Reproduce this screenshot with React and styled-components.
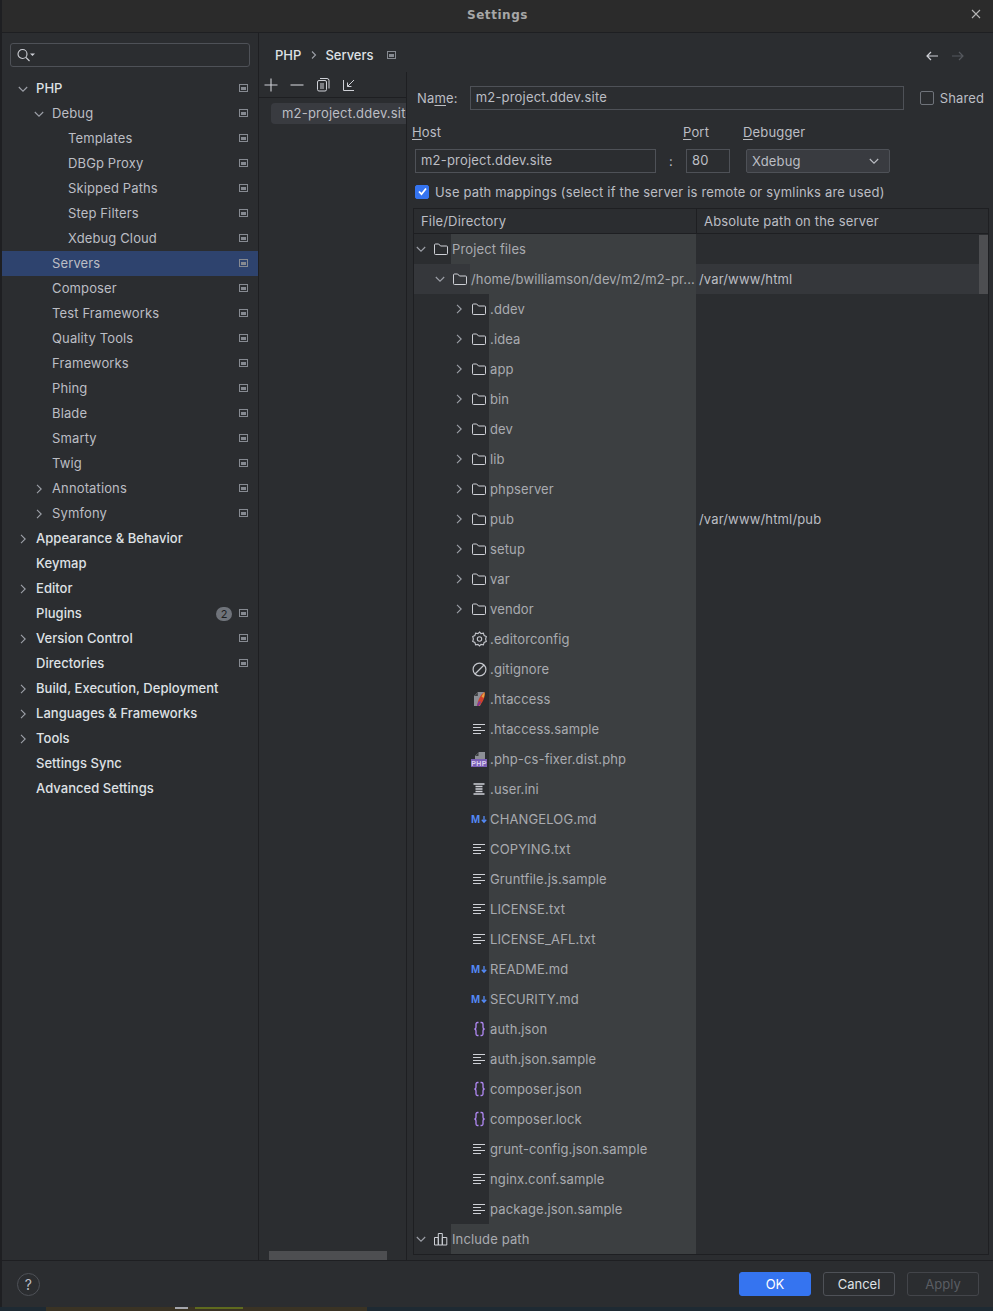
import React from "react";
import styled, { createGlobalStyle } from "styled-components";

const Global = createGlobalStyle`
  html, body { margin: 0; padding: 0; background: #1e1f22; }
  body { font-family: Inter, "Noto Sans", sans-serif; font-size: 13px; color: #bcbec4; letter-spacing: .17px; }
  * { box-sizing: border-box; }
`;

const Dialog = styled.div`
  width: 993px; height: 1311px; display: flex; flex-direction: column; background: #1e1f22; overflow: hidden;
`;
const Window = styled.div`
  height: 1307px; flex: none; display: flex; flex-direction: column; background: #2b2d30; margin-left: 2px; border-top-left-radius: 6px;
`;
const BehindStrip = styled.div`flex: 1; display: flex; background: #1e2a33;`;
const BehindPanel = styled.div`
  margin-left: 46px; width: 321px; background: #3a3324; display: flex; justify-content: flex-start; padding-left: 129px; gap: 7px;
`;
const BehindIcon = styled.span`width: 13px; height: 2px; background: #a4a6ac; flex: none;`;
const BehindText = styled.span`width: 48px; height: 2px; background: #5f6a1e; flex: none;`;
const TitleBar = styled.div`
  height: 33px; flex: none; display: flex; align-items: center; justify-content: center; position: relative;
  background: #2b2b2b; border-bottom: 1px solid #1e1f22; font-family: "DejaVu Sans", sans-serif; font-weight: 700; font-size: 12px; color: #a7a7a7; letter-spacing: .55px; padding-bottom: 3px;
`;
const CloseBtn = styled.svg`
  position: absolute; right: 12px; top: 9px;
`;
const Body = styled.div`flex: 1; min-height: 0; display: flex;`;
const Sidebar = styled.div`
  width: 257px; flex: none; border-right: 1px solid #1e1f22; padding-top: 10px; display: flex; flex-direction: column;
`;
const SearchBox = styled.div`
  width: 240px; height: 24px; margin-left: 8px; margin-bottom: 9px; border: 1px solid #4e5157; border-radius: 3px; display: flex; align-items: center; padding-left: 5px; flex: none;
`;
const Row = styled.div`
  height: 25px; flex: none; display: flex; align-items: center; position: relative; padding-left: ${p => p.$pad}px; padding-right: 10px;
  background: ${p => (p.$selected ? "#2e436e" : "transparent")};
  color: ${p => (p.$top ? "#dfe1e5" : "#bcbec4")};
  font-weight: ${p => (p.$top ? 500 : 400)};
  letter-spacing: ${p => (p.$top ? ".04px" : ".13px")};
`;
const ChevSlot = styled.span`
  position: absolute; left: ${p => p.$pad - 19}px; top: 7px; width: 12px; height: 12px; display: flex;
`;
const RowLabel = styled.span`flex: 1; line-height: 25px; white-space: nowrap;`;
const Badge = styled.span`
  width: 16px; height: 14px; border-radius: 7px; background: #6f737a; color: #1e1f22; font-size: 11px; font-weight: 400; display: flex; align-items: center; justify-content: center; margin-right: 7px;
`;
const PinMark = styled.svg`flex: none; margin-top: -1px;`;
const Main = styled.div`flex: 1; min-width: 0; display: flex; flex-direction: column;`;
const Breadcrumb = styled.div`
  height: 39px; flex: none; display: flex; align-items: center; padding-left: 16px; padding-top: 4px; font-weight: 500; color: #dfe1e5; position: relative; letter-spacing: 0;
`;
const Crumb = styled.span`line-height: 16px;`;
const Sep = styled.svg`margin: 0 7px 0 9px;`;
const CrumbIcon = styled.span`display: flex; margin-left: 13px; margin-top: 2px;`;
const NavArrows = styled.div`position: absolute; right: 27px; top: 17px; display: flex; gap: 10px;`;
const Split = styled.div`flex: 1; min-height: 0; display: flex;`;
const ListPane = styled.div`
  width: 148px; flex: none; border-right: 1px solid #1e1f22; display: flex; flex-direction: column; position: relative; overflow: hidden;
`;
const Toolbar = styled.div`
  height: 26px; flex: none; border-bottom: 1px solid #1e1f22; display: flex; align-items: center; padding-left: 4px; gap: 10px;
`;
const ServerItem = styled.div`
  margin: 5px 0 0 12px; width: 200px; height: 21px; background: #393b40; border-radius: 4px; padding-left: 11px; line-height: 20px; color: #bcbec4; white-space: nowrap; flex: none; letter-spacing: .2px;
`;
const HScroll = styled.div`position: absolute; left: 10px; bottom: 0; width: 118px; height: 9px; background: #4d4e51;`;
const Form = styled.div`flex: 1; min-width: 0; padding: 0 4px 5px 4px; display: flex; flex-direction: column;`;
const NameRow = styled.div`height: 37px; margin-top: 7px; flex: none; display: flex; align-items: center; padding-left: 6px;`;
const FieldLabel = styled.span`color: #bcbec4; line-height: 16px; u { text-underline-offset: 2px; }`;
const Input = styled.div`
  height: 24px; width: ${p => p.$w}px; margin-left: ${p => p.$ml || 0}px; border: 1px solid #4e5157; background: #2b2d30; padding-left: 5px; line-height: 21px; color: #bcbec4; flex: none; letter-spacing: .2px;
`;
const Check = styled.span`
  width: 14px; height: 14px; border-radius: 2px; flex: none; display: flex; align-items: center; justify-content: center;
  border: 1px solid ${p => (p.$on ? "#3574f0" : "#6f737a")}; background: ${p => (p.$on ? "#3574f0" : "transparent")};
`;
const SharedWrap = styled.div`display: flex; align-items: center; gap: 6px; margin-left: 16px; white-space: nowrap; padding-top: 1px;`;
const HostLabels = styled.div`height: 22px; flex: none; display: flex; align-items: center; margin-top: 5px; padding-left: 1px;`;
const LabelCell = styled.span`width: ${p => p.$w}px; flex: none; u { text-underline-offset: 2px; }`;
const HostRow = styled.div`height: 30px; margin-top: 6px; flex: none; display: flex; align-items: flex-start; padding-left: 4px;`;
const Colon = styled.span`width: 30px; flex: none; text-align: center; line-height: 24px;`;
const Select = styled.div`
  width: 144px; height: 24px; margin-left: 16px; background: #393b40; border: 1px solid #4e5157; border-radius: 2px; display: flex; align-items: center; justify-content: space-between; padding: 0 9px 0 5px; flex: none;
`;
const MapRow = styled.div`height: 25px; flex: none; padding-left: 4px; display: flex; align-items: center; gap: 6px;`;
const Table = styled.div`
  flex: 1; min-height: 0; margin-top: 4px; margin-left: 2px; border: 1px solid #1e1f22; position: relative; display: flex; flex-direction: column; overflow: hidden;
`;
const HeaderRow = styled.div`height: 25px; flex: none; display: grid; grid-template-columns: 282px 1fr; border-bottom: 1px solid #1e1f22;`;
const HeadCell = styled.div`padding-left: ${p => p.$pad}px; line-height: 24px; color: #bcbec4; border-left: ${p => (p.$div ? "1px solid #1e1f22" : "none")};`;
const TreeRow = styled.div`
  height: 30px; flex: none; display: grid; grid-template-columns: 282px 1fr; padding-right: 10px;
  background: ${p => (p.$hl ? "#35373b" : "transparent")};
`;
const TreeCell = styled.div`display: flex; align-items: center; min-width: 0; position: relative; padding-left: ${p => p.$indent}px;`;
const TreeChev = styled.span`width: 12px; height: 12px; display: flex; flex: none; position: absolute; left: ${p => p.$left}px; top: 9px;`;
const TreeIcon = styled.span`
  width: 16px; height: 16px; flex: none; display: flex; align-items: center; justify-content: center; margin-right: 2px;
`;
const Shade = styled.span`
  flex: 1; min-width: 0; align-self: stretch; background: #3c3f41; line-height: 30px; padding-left: 1px; color: #a9abb0; white-space: nowrap; overflow: hidden; letter-spacing: .13px;
`;
const ServerPath = styled.div`line-height: 30px; padding-left: 3px; color: #bcbec4; letter-spacing: .15px;`;
const VScroll = styled.div`position: absolute; right: 0; top: 26px; width: 9px; height: 59px; background: #4d4e51;`;
const Footer = styled.div`
  height: 47px; flex: none; border-top: 1px solid #1e1f22; display: flex; align-items: center; padding: 0 14px 0 15px; gap: 12px;
`;
const Help = styled.div`
  width: 23px; height: 23px; border-radius: 50%; border: 1px solid #4e5157; display: flex; align-items: center; justify-content: center; color: #bcbec4; font-size: 14px; margin-right: auto;
`;
const Btn = styled.div`
  width: 72px; height: 24px; border-radius: 3px; display: flex; align-items: center; justify-content: center; font-size: 13px; letter-spacing: 0;
  background: ${p => (p.$primary ? "#3574f0" : "transparent")};
  border: 1px solid ${p => (p.$primary ? "#3574f0" : p.$dis ? "#43454a" : "#4e5157")};
  color: ${p => (p.$primary ? "#fff" : p.$dis ? "#5a5d63" : "#dfe1e5")};
`;

const Chevron = ({ open, color = "#9da0a8" }) => (
  <svg width="12" height="12" viewBox="0 0 12 12" fill="none" stroke={color} strokeWidth="1.1">
    {open ? <path d="M1.8 4l4.2 4.2L10.2 4" /> : <path d="M4 1.8l4.2 4.2L4 10.2" />}
  </svg>
);
const Pin = () => (
  <PinMark width="9" height="8" viewBox="0 0 9 8">
    <rect x=".5" y=".5" width="8" height="7" fill="none" stroke="#868a91" />
    <rect x="2" y="3" width="5" height="3" fill="#868a91" />
  </PinMark>
);
const Folder = () => (
  <svg width="16" height="16" viewBox="0 0 16 16" fill="none" stroke="#ced0d6" strokeWidth="1">
    <path d="M1.5 4a1 1 0 0 1 1-1h3.2l1.8 2h6a1 1 0 0 1 1 1v6.5a1 1 0 0 1-1 1h-11a1 1 0 0 1-1-1z" />
  </svg>
);
const TextFile = () => (
  <svg width="14" height="12" viewBox="0 0 14 12" stroke="#ced0d6" strokeWidth="1.2">
    <path d="M1 1.5h12M1 4.5h8M1 7.5h12M1 10.5h8" />
  </svg>
);
const Gear = () => (
  <svg width="15" height="16" viewBox="0 0 15 16" fill="none" stroke="#c4c6cc" strokeWidth="1.1">
    <path d="M7.5 1l1.500 1.600 2.400-.4.700 2.300 2.200 1-.7 2.500.7 2.500-2.200 1-.7 2.300-2.400-.4L7.500 15l-1.500-1.600-2.400.4-.7-2.300-2.200-1 .7-2.500-.7-2.500 2.200-1 .7-2.300 2.400.4z" />
    <circle cx="7.500" cy="8" r="2.200" />
  </svg>
);
const Ignore = () => (
  <svg width="15" height="15" viewBox="0 0 15 15" fill="none" stroke="#c4c6cc" strokeWidth="1.2">
    <circle cx="7.5" cy="7.5" r="6.4" /><path d="M3 12L12 3" />
  </svg>
);
const Apache = () => (
  <svg width="14" height="16" viewBox="0 0 14 16">
    <path d="M2 15V5l4-4h6v3L8 15z" fill="#8d8f96" />
    <path d="M5.800 5V1.500L2.300 5z" fill="#3c3f41" />
    <path d="M5 15C6 9 8 4 12.500 1c1 4-1 10-5.500 14z" fill="#d0402c" />
    <path d="M9.500 5.500c1-2 2-3 3-4.500.3 2 0 4-1 6z" fill="#e8a33d" />
    <path d="M5 15c.6-2 1-3.500 2-5l2 1c-1 2-2 3-2.500 4z" fill="#7a3a9c" />
  </svg>
);
const PhpFile = () => (
  <svg width="16" height="16" viewBox="0 0 16 16">
    <path d="M8 1H14v7H4V5z" fill="#8d8f96" />
    <path d="M7.500 5V1.500L4.500 5z" fill="#3c3f41" />
    <rect x="0" y="8" width="16" height="8" fill="#7a5fb5" />
    <text x="8" y="14.500" textAnchor="middle" fontFamily="'Liberation Sans', sans-serif" fontSize="7" fontWeight="700" letterSpacing=".3" fill="#d9d0ee">PHP</text>
  </svg>
);
const IniFile = () => (
  <svg width="12" height="12" viewBox="0 0 12 12" stroke="#ced0d6" strokeWidth="1.4">
    <path d="M.5 1h11M2.500 3.500h7M2.500 6h7M2.500 8.500h7M.5 11h11" />
  </svg>
);
const Markdown = () => (
  <svg width="16" height="14" viewBox="0 0 16 14" fill="none" stroke="#548af7">
    <text x="0" y="11" fontFamily="'Liberation Sans', sans-serif" fontSize="11" fontWeight="700" fill="#548af7" stroke="none" letterSpacing="0">M</text>
    <path d="M13 4v6M10.800 7.800l2.200 2.500 2.200-2.500" strokeWidth="1.300" />
  </svg>
);
const Json = () => (
  <svg width="13" height="16" viewBox="0 0 13 16" fill="none" stroke="#b189f5" strokeWidth="1.300">
    <path d="M5.500 1.500h-1a1.500 1.500 0 0 0-1.500 1.500v3.200c0 .8-.5 1.600-1.500 1.800 1 .2 1.500 1 1.500 1.800V13a1.500 1.500 0 0 0 1.500 1.500h1" />
    <path d="M7.500 1.500h1A1.500 1.500 0 0 1 10 3v3.200c0 .8.500 1.600 1.500 1.800-1 .2-1.500 1-1.500 1.800V13a1.500 1.500 0 0 1-1.500 1.500h-1" />
  </svg>
);
const Library = () => (
  <svg width="14" height="14" viewBox="0 0 14 14" fill="none" stroke="#ced0d6" strokeWidth="1">
    <path d="M.5 13V5.500h3.800V13zM4.300 13V1.500h4V13zM8.300 13V5.500h4.500V13z" />
  </svg>
);

const settings = [
  ["PHP", 36, { top: 1, open: 1, pin: 1 }],
  ["Debug", 52, { open: 1, pin: 1 }],
  ["Templates", 68, { pin: 1 }],
  ["DBGp Proxy", 68, { pin: 1 }],
  ["Skipped Paths", 68, { pin: 1 }],
  ["Step Filters", 68, { pin: 1 }],
  ["Xdebug Cloud", 68, { pin: 1 }],
  ["Servers", 52, { pin: 1, selected: 1 }],
  ["Composer", 52, { pin: 1 }],
  ["Test Frameworks", 52, { pin: 1 }],
  ["Quality Tools", 52, { pin: 1 }],
  ["Frameworks", 52, { pin: 1 }],
  ["Phing", 52, { pin: 1 }],
  ["Blade", 52, { pin: 1 }],
  ["Smarty", 52, { pin: 1 }],
  ["Twig", 52, { pin: 1 }],
  ["Annotations", 52, { closed: 1, pin: 1 }],
  ["Symfony", 52, { closed: 1, pin: 1 }],
  ["Appearance & Behavior", 36, { top: 1, closed: 1 }],
  ["Keymap", 36, { top: 1 }],
  ["Editor", 36, { top: 1, closed: 1 }],
  ["Plugins", 36, { top: 1, pin: 1, badge: "2" }],
  ["Version Control", 36, { top: 1, closed: 1, pin: 1 }],
  ["Directories", 36, { top: 1, pin: 1 }],
  ["Build, Execution, Deployment", 36, { top: 1, closed: 1 }],
  ["Languages & Frameworks", 36, { top: 1, closed: 1 }],
  ["Tools", 36, { top: 1, closed: 1 }],
  ["Settings Sync", 36, { top: 1 }],
  ["Advanced Settings", 36, { top: 1 }],
];

const files = [
  [".ddev", "d"], [".idea", "d"], ["app", "d"], ["bin", "d"], ["dev", "d"], ["lib", "d"], ["phpserver", "d"],
  ["pub", "d", "/var/www/html/pub"], ["setup", "d"], ["var", "d"], ["vendor", "d"],
  [".editorconfig", "gear"], [".gitignore", "ignore"], [".htaccess", "apache"], [".htaccess.sample", "t"],
  [".php-cs-fixer.dist.php", "php"], [".user.ini", "ini"], ["CHANGELOG.md", "md"], ["COPYING.txt", "t"],
  ["Gruntfile.js.sample", "t"], ["LICENSE.txt", "t"], ["LICENSE_AFL.txt", "t"], ["README.md", "md"],
  ["SECURITY.md", "md"], ["auth.json", "json"], ["auth.json.sample", "t"], ["composer.json", "json"],
  ["composer.lock", "json"], ["grunt-config.json.sample", "t"], ["nginx.conf.sample", "t"], ["package.json.sample", "t"],
];
const iconFor = { d: Folder, t: TextFile, gear: Gear, ignore: Ignore, apache: Apache, php: PhpFile, ini: IniFile, md: Markdown, json: Json };

export default function App() {
  return (
    <Dialog>
      <Global />
      <Window>
        <TitleBar>
          Settings
          <CloseBtn width="10" height="10" viewBox="0 0 10 10" stroke="#b5b5b5" strokeWidth="1.1"><path d="M1 1l8 8M9 1l-8 8" /></CloseBtn>
        </TitleBar>
        <Body>
          <Sidebar>
            <SearchBox>
              <svg width="20" height="16" viewBox="0 0 20 16" fill="none" stroke="#ced0d6" strokeWidth="1.1">
                <circle cx="6.500" cy="7" r="4.500" /><path d="M10 10.500l3.500 3.500" />
                <path d="M14 6.500h5l-2.500 2.500z" fill="#ced0d6" stroke="none" />
              </svg>
            </SearchBox>
            {settings.map(([label, pad, o]) => (
              <Row key={label} $pad={pad - 2} $top={o.top} $selected={o.selected}>
                {(o.open || o.closed) && <ChevSlot $pad={pad - 2}><Chevron open={o.open} /></ChevSlot>}
                <RowLabel>{label}</RowLabel>
                {o.badge && <Badge>{o.badge}</Badge>}
                {o.pin && <Pin />}
              </Row>
            ))}
          </Sidebar>
          <Main>
            <Breadcrumb>
              <Crumb>PHP</Crumb>
              <Sep width="8" height="10" viewBox="0 0 8 10" fill="none" stroke="#9da0a8" strokeWidth="1.1"><path d="M2 1.500L5.500 5 2 8.500" /></Sep>
              <Crumb>Servers</Crumb>
              <CrumbIcon><Pin /></CrumbIcon>
              <NavArrows>
                <svg width="16" height="12" viewBox="0 0 16 12" fill="none" stroke="#ced0d6" strokeWidth="1.2"><path d="M14 6H3M7 2L3 6l4 4" /></svg>
                <svg width="16" height="12" viewBox="0 0 16 12" fill="none" stroke="#55585e" strokeWidth="1.2"><path d="M2 6h11M9 2l4 4-4 4" /></svg>
              </NavArrows>
            </Breadcrumb>
            <Split>
              <ListPane>
                <Toolbar>
                  <svg width="16" height="16" viewBox="0 0 16 16" stroke="#ced0d6" strokeWidth="1.1"><path d="M8 1.500v13M1.500 8h13" /></svg>
                  <svg width="16" height="16" viewBox="0 0 16 16" stroke="#ced0d6" strokeWidth="1.1"><path d="M1.500 8h13" /></svg>
                  <svg width="16" height="16" viewBox="0 0 16 16" fill="none" stroke="#ced0d6" strokeWidth="1"><rect x="2.500" y="3.500" width="9" height="10.500" rx="1.500" /><path d="M5 1.500h7a2 2 0 0 1 2 2v8M5 7h4M5 9h4M5 11h4" /></svg>
                  <svg width="16" height="16" viewBox="0 0 16 16" fill="none" stroke="#ced0d6" strokeWidth="1"><path d="M2.500 3v10.500H13M13 3L6.500 9.500M6.500 5.500v4h4" /></svg>
                </Toolbar>
                <ServerItem>m2-project.ddev.site</ServerItem>
                <HScroll />
              </ListPane>
              <Form>
                <NameRow>
                  <FieldLabel>Na<u>m</u>e:</FieldLabel>
                  <Input $w={434} $ml={12}>m2-project.ddev.site</Input>
                  <SharedWrap><Check />Shared</SharedWrap>
                </NameRow>
                <HostLabels>
                  <LabelCell $w={271}><u>H</u>ost</LabelCell>
                  <LabelCell $w={60}><u>P</u>ort</LabelCell>
                  <LabelCell $w={100}><u>D</u>ebugger</LabelCell>
                </HostLabels>
                <HostRow>
                  <Input $w={241}>m2-project.ddev.site</Input>
                  <Colon>:</Colon>
                  <Input $w={44}>80</Input>
                  <Select>Xdebug<Chevron open color="#bcbec4" /></Select>
                </HostRow>
                <MapRow>
                  <Check $on>
                    <svg width="11" height="11" viewBox="0 0 11 11" fill="none" stroke="#fff" strokeWidth="1.800"><path d="M2 5.500L4.500 8.200 9 2.500" /></svg>
                  </Check>
                  Use path mappings (select if the server is remote or symlinks are used)
                </MapRow>
                <Table>
                  <HeaderRow>
                    <HeadCell $pad={7}>File/Directory</HeadCell>
                    <HeadCell $pad={7} $div>Absolute path on the server</HeadCell>
                  </HeaderRow>
                  <TreeRow>
                    <TreeCell $indent={19}>
                      <TreeChev $left={1}><Chevron open /></TreeChev>
                      <TreeIcon><Folder /></TreeIcon>
                      <Shade>Project files</Shade>
                    </TreeCell>
                    <div />
                  </TreeRow>
                  <TreeRow $hl>
                    <TreeCell $indent={38}>
                      <TreeChev $left={20}><Chevron open /></TreeChev>
                      <TreeIcon><Folder /></TreeIcon>
                      <Shade>/home/bwilliamson/dev/m2/m2-pr...</Shade>
                    </TreeCell>
                    <ServerPath>/var/www/html</ServerPath>
                  </TreeRow>
                  {files.map(([name, kind, server]) => {
                    const Ico = iconFor[kind];
                    return (
                      <TreeRow key={name}>
                        <TreeCell $indent={57}>
                          {kind === "d" && <TreeChev $left={39}><Chevron /></TreeChev>}
                          <TreeIcon><Ico /></TreeIcon>
                          <Shade>{name}</Shade>
                        </TreeCell>
                        {server ? <ServerPath>{server}</ServerPath> : <div />}
                      </TreeRow>
                    );
                  })}
                  <TreeRow>
                    <TreeCell $indent={19}>
                      <TreeChev $left={1}><Chevron open /></TreeChev>
                      <TreeIcon><Library /></TreeIcon>
                      <Shade>Include path</Shade>
                    </TreeCell>
                    <div />
                  </TreeRow>
                  <VScroll />
                </Table>
              </Form>
            </Split>
          </Main>
        </Body>
        <Footer>
          <Help>?</Help>
          <Btn $primary>OK</Btn>
          <Btn>Cancel</Btn>
          <Btn $dis>Apply</Btn>
        </Footer>
      </Window>
      <BehindStrip>
        <BehindPanel><BehindIcon /><BehindText /></BehindPanel>
      </BehindStrip>
    </Dialog>
  );
}
